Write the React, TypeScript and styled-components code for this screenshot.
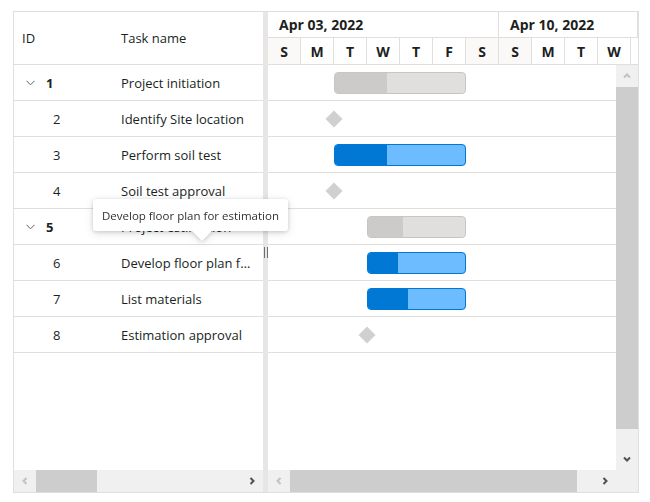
import styled, { createGlobalStyle } from "styled-components";

const DAY = 33;

type Task = {
  id: number;
  name: string;
  parent?: boolean;
  start: number;
  days?: number;
  progress?: number;
  milestone?: boolean;
};

const tasks: Task[] = [
  { id: 1, name: "Project initiation", parent: true, start: 2, days: 4, progress: 0.4 },
  { id: 2, name: "Identify Site location", start: 2, milestone: true },
  { id: 3, name: "Perform soil test", start: 2, days: 4, progress: 0.4 },
  { id: 4, name: "Soil test approval", start: 2, milestone: true },
  { id: 5, name: "Project estimation", parent: true, start: 3, days: 3, progress: 0.36 },
  { id: 6, name: "Develop floor plan for estimation", start: 3, days: 3, progress: 0.31 },
  { id: 7, name: "List materials", start: 3, days: 3, progress: 0.41 },
  { id: 8, name: "Estimation approval", start: 3, milestone: true },
];

// last cell only peeks in at the right edge, its letter is out of view
const days = ["S", "M", "T", "W", "T", "F", "S", "S", "M", "T", "W", ""];
const weekend = [0, 6, 7];

const GlobalStyle = createGlobalStyle`
  body {
    margin: 0;
    background: #fff;
    font-family: "Open Sans", "Noto Sans", sans-serif;
    color: #201f1e;
  }
`;

const Page = styled.div`
  padding: 11px 0 0 13px;
`;

const Gantt = styled.div`
  position: relative;
  width: 624px;
  height: 480px;
  border: 1px solid #e1dfdd;
  display: flex;
`;

const LeftPane = styled.div`
  width: 249px;
  display: flex;
  flex-direction: column;
`;

const GridHeader = styled.div`
  height: 52px;
  border-bottom: 1px solid #e1dfdd;
  display: flex;
  align-items: center;
  font-size: 13px;
`;

const HeaderCell = styled.div<{ $w?: number; $pad: number }>`
  width: ${(p) => (p.$w ? `${p.$w}px` : "auto")};
  flex: ${(p) => (p.$w ? "none" : 1)};
  padding-left: ${(p) => p.$pad}px;
  box-sizing: border-box;
`;

const GridBody = styled.div`
  flex: 1;
  overflow: hidden;
`;

const GridRow = styled.div`
  height: 35px;
  border-bottom: 1px solid #e1dfdd;
  display: flex;
  align-items: center;
  font-size: 13px;
`;

const IdCell = styled.div<{ $parent?: boolean }>`
  width: 96px;
  padding-left: ${(p) => (p.$parent ? 8 : 39)}px;
  box-sizing: border-box;
  display: flex;
  align-items: center;
  font-weight: ${(p) => (p.$parent ? 700 : 400)};
`;

const Expander = styled.span`
  width: 16px;
  height: 16px;
  margin-right: 8px;
  display: flex;
  align-items: center;
  justify-content: center;
`;

const NameCell = styled.div`
  flex: 1;
  min-width: 0;
  padding: 0 8px 0 11px;
  white-space: nowrap;
  overflow: hidden;
  text-overflow: ellipsis;
`;

const Splitter = styled.div`
  width: 5px;
  background: #e8e6e4;
  display: flex;
  align-items: center;
  justify-content: center;
`;

const Grip = styled.div`
  width: 2px;
  height: 11px;
  border-left: 1px solid #6e6e6e;
  border-right: 1px solid #6e6e6e;
`;

const ChartPane = styled.div`
  width: 370px;
  display: flex;
  flex-direction: column;
`;

const WeekRow = styled.div`
  height: 25px;
  border-bottom: 1px solid #e1dfdd;
  display: flex;
  overflow: hidden;
`;

const WeekCell = styled.div<{ $w?: number }>`
  width: ${(p) => (p.$w ? `${p.$w}px` : "auto")};
  flex: ${(p) => (p.$w ? "none" : 1)};
  box-sizing: border-box;
  border-right: 1px solid #e1dfdd;
  padding-left: 11px;
  display: flex;
  align-items: center;
  font-size: 14px;
  font-weight: 700;
  white-space: nowrap;
`;

const DayRow = styled.div`
  height: 26px;
  border-bottom: 1px solid #e1dfdd;
  display: flex;
  overflow: hidden;
`;

const DayCell = styled.div<{ $weekend?: boolean }>`
  width: ${DAY}px;
  flex: none;
  box-sizing: border-box;
  border-right: 1px solid #e1dfdd;
  background: ${(p) => (p.$weekend ? "#faf9f8" : "#fff")};
  display: flex;
  align-items: center;
  justify-content: center;
  font-size: 14px;
  font-weight: 700;
`;

const ChartBody = styled.div`
  flex: 1;
  display: flex;
  min-height: 0;
`;

const ChartRows = styled.div`
  width: 348px;
  overflow: hidden;
`;

const ChartRow = styled.div`
  height: 35px;
  border-bottom: 1px solid #e1dfdd;
  display: flex;
  align-items: center;
`;

const Bar = styled.div<{ $parent?: boolean }>`
  height: 22px;
  box-sizing: border-box;
  border: 1px solid ${(p) => (p.$parent ? "#c8c6c4" : "#0078d4")};
  border-radius: 4px;
  background: ${(p) => (p.$parent ? "#e1dfdd" : "#6cbcff")};
  overflow: hidden;
  display: flex;
`;

const Progress = styled.div<{ $parent?: boolean }>`
  height: 100%;
  background: ${(p) => (p.$parent ? "#cdcbc9" : "#0078d4")};
`;

const Milestone = styled.div`
  width: 12px;
  height: 12px;
  background: #d2d0ce;
  transform: rotate(45deg);
`;

const VScroll = styled.div`
  width: 22px;
  background: #f0f0f0;
  display: flex;
  flex-direction: column;
`;

const HScroll = styled.div`
  height: 22px;
  background: #f0f0f0;
  display: flex;
`;

const ArrowBox = styled.div`
  width: 22px;
  height: 22px;
  flex: none;
  display: flex;
  align-items: center;
  justify-content: center;
`;

const Thumb = styled.div`
  background: #cdcdcd;
  flex: none;
`;

const Track = styled.div`
  flex: 1;
`;

const Tooltip = styled.div`
  position: absolute;
  left: 79px;
  top: 187px;
  height: 32px;
  padding: 0 9px;
  background: #fff;
  border-radius: 3px;
  display: flex;
  align-items: center;
  font-size: 11.5px;
  color: #323130;
  white-space: nowrap;
  filter: drop-shadow(0 1px 2px rgba(0, 0, 0, 0.16)) drop-shadow(0 2px 4px rgba(0, 0, 0, 0.1));

  &::after {
    content: "";
    position: absolute;
    left: 99px;
    top: 32px;
    border-left: 10px solid transparent;
    border-right: 10px solid transparent;
    border-top: 10px solid #fff;
  }
`;

type Dir = "left" | "right" | "up" | "down";

const arrowPoints: Record<Dir, string> = {
  left: "4.5,1 1.5,4 4.5,7",
  right: "1.5,1 4.5,4 1.5,7",
  up: "1,4.5 4,1.5 7,4.5",
  down: "1,1.5 4,4.5 7,1.5",
};

const ScrollArrow = ({ dir, active }: { dir: Dir; active?: boolean }) => {
  const horiz = dir === "left" || dir === "right";
  return (
    <ArrowBox>
      <svg width={horiz ? 6 : 8} height={horiz ? 8 : 6}>
        <polyline
          points={arrowPoints[dir]}
          fill="none"
          stroke={active ? "#505050" : "#c2c2c2"}
          strokeWidth={2}
        />
      </svg>
    </ArrowBox>
  );
};

const Chevron = () => (
  <svg width="9" height="6">
    <polyline points="0.5,0.8 4.5,4.8 8.5,0.8" fill="none" stroke="#605e5c" strokeWidth={1} />
  </svg>
);

const TaskBar = ({ task }: { task: Task }) => {
  const left = task.start * DAY;
  if (task.milestone) {
    return <Milestone style={{ marginLeft: left - 6 }} />;
  }
  const width = (task.days ?? 1) * DAY;
  return (
    <Bar $parent={task.parent} style={{ marginLeft: left, width }}>
      <Progress $parent={task.parent} style={{ width: Math.round(width * (task.progress ?? 0)) - 1 }} />
    </Bar>
  );
};

export default function App() {
  return (
    <>
      <GlobalStyle />
      <Page>
        <Gantt>
          <LeftPane>
            <GridHeader>
              <HeaderCell $w={96} $pad={8}>ID</HeaderCell>
              <HeaderCell $pad={11}>Task name</HeaderCell>
            </GridHeader>
            <GridBody>
              {tasks.map((t) => (
                <GridRow key={t.id}>
                  <IdCell $parent={t.parent}>
                    {t.parent && (
                      <Expander>
                        <Chevron />
                      </Expander>
                    )}
                    {t.id}
                  </IdCell>
                  <NameCell>{t.name}</NameCell>
                </GridRow>
              ))}
            </GridBody>
            <HScroll>
              <ScrollArrow dir="left" />
              <Thumb style={{ width: 61 }} />
              <Track />
              <ScrollArrow dir="right" active />
            </HScroll>
          </LeftPane>
          <Splitter>
            <Grip />
          </Splitter>
          <ChartPane>
            <WeekRow>
              <WeekCell $w={DAY * 7}>Apr 03, 2022</WeekCell>
              <WeekCell>Apr 10, 2022</WeekCell>
            </WeekRow>
            <DayRow>
              {days.map((d, i) => (
                <DayCell key={i} $weekend={weekend.includes(i)}>
                  {d}
                </DayCell>
              ))}
            </DayRow>
            <ChartBody>
              <ChartRows>
                {tasks.map((t) => (
                  <ChartRow key={t.id}>
                    <TaskBar task={t} />
                  </ChartRow>
                ))}
              </ChartRows>
              <VScroll>
                <ScrollArrow dir="up" />
                <Thumb style={{ height: 342 }} />
                <Track />
                <ScrollArrow dir="down" active />
              </VScroll>
            </ChartBody>
            <HScroll>
              <ScrollArrow dir="left" />
              <Thumb style={{ width: 287 }} />
              <Track />
              <ScrollArrow dir="right" active />
              <ArrowBox />
            </HScroll>
          </ChartPane>
          <Tooltip>Develop floor plan for estimation</Tooltip>
        </Gantt>
      </Page>
    </>
  );
}
